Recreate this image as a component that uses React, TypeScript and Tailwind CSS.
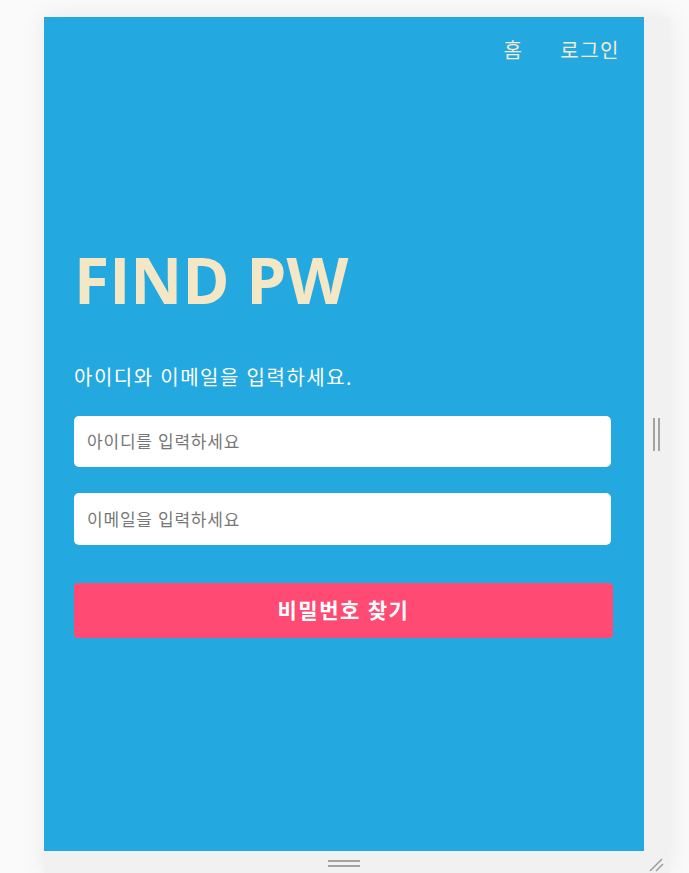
import React from 'react';

const font = { fontFamily: '"Noto Sans", "Noto Sans CJK KR", sans-serif' };
const titleFont = { fontFamily: '"Open Sans", "Noto Sans CJK KR", sans-serif' };

const FindPw: React.FC = () => {
  return (
    <div className="w-[600px] h-[835px] bg-[#24a8e0] border-b border-[#e8f4fb]">
      <nav className="flex justify-end gap-[37px] pt-[20px] pr-[24px] text-[20px] leading-[28px] tracking-[1.5px] text-[#f5ead0]">
        <span>홈</span>
        <span>로그인</span>
      </nav>

      <div className="px-[30px]">
        <h1 className="mt-[175px] text-[64px] leading-[80px] font-bold text-[#f3e7c5]" style={titleFont}>
          FIND PW
        </h1>
        <p className="mt-[44px] text-[20px] leading-[28px] tracking-[1.5px] text-white">
          아이디와 이메일을 입력하세요.
        </p>

        <input
          placeholder="아이디를 입력하세요"
          className="mt-[24px] block w-[537px] h-[51px] rounded-[5px] bg-white px-[13px] text-[17px] tracking-[0.8px] text-gray-800 placeholder:text-[#777] outline-none"
          style={font}
        />
        <input
          placeholder="이메일을 입력하세요"
          className="mt-[26px] block w-[537px] h-[52px] rounded-[5px] bg-white px-[13px] text-[17px] tracking-[0.8px] text-gray-800 placeholder:text-[#777] outline-none"
          style={font}
        />

        <button
          className="mt-[38px] block w-[539px] h-[55px] rounded-[4px] bg-[#ff4b73] text-white text-[21px] tracking-[1.5px] font-bold"
          style={font}
        >
          비밀번호 찾기
        </button>
      </div>
    </div>
  );
};

export default function App() {
  return (
    <div className="min-h-[873px] bg-[#fafafa] pl-[44px] pt-[17px] overflow-hidden" style={font}>
      <div className="inline-grid grid-cols-[600px_25px] grid-rows-[835px_22px] shadow-[0_0_24px_rgba(0,0,0,0.08)]">
        <FindPw />
        <div className="bg-[#f1f1f1] flex items-center justify-center gap-[3px]">
          <div className="w-[2px] h-[33px] bg-[#a3a3a3]" />
          <div className="w-[2px] h-[33px] bg-[#a3a3a3]" />
        </div>
        <div className="bg-[#f1f1f1] flex flex-col items-center justify-center gap-[3px] pt-[1px]">
          <div className="w-[32px] h-[2px] bg-[#a3a3a3]" />
          <div className="w-[32px] h-[2px] bg-[#a3a3a3]" />
        </div>
        <div className="bg-[#f1f1f1] flex items-end justify-start pl-[4px] pb-[2px]">
          <svg width="16" height="16" viewBox="0 0 16 16">
            <line x1="2" y1="15" x2="14" y2="3" stroke="#9a9a9a" strokeWidth="1.5" />
            <line x1="8" y1="15" x2="15" y2="8" stroke="#9a9a9a" strokeWidth="1.5" />
          </svg>
        </div>
      </div>
    </div>
  );
}
